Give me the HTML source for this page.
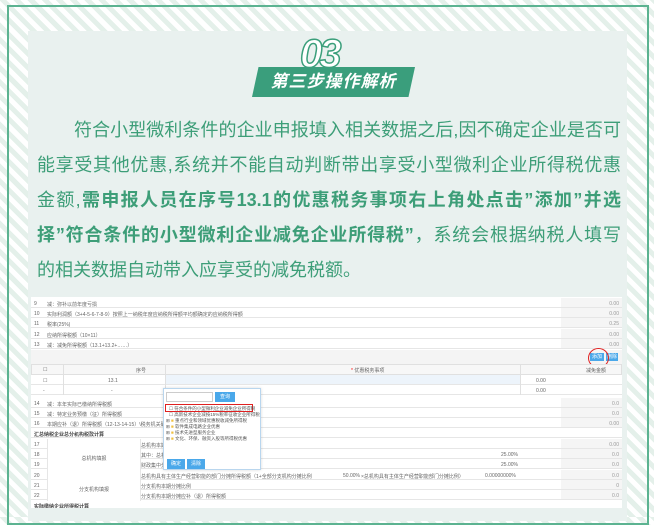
<!DOCTYPE html>
<html><head><meta charset="utf-8"><style>
*{margin:0;padding:0;box-sizing:border-box}
body{width:654px;height:517px;overflow:hidden;position:relative;background:repeating-linear-gradient(45deg,#ffffff 0 5px,#e4f0ea 5px 10px);font-family:"Liberation Sans","Noto Sans CJK SC",sans-serif}
.frame{position:absolute;left:7px;top:5px;width:642px;height:520px;border:2px solid #5cb391}
.panel{position:absolute;left:28px;top:31px;width:599px;height:490px;background:#e9f1ef}
.abs{position:absolute}
.t03{left:300px;top:34px;font-size:40px;font-style:italic;font-weight:bold;color:#fff;-webkit-text-stroke:1.5px #3b9f7b;letter-spacing:-3px;line-height:40px}
.ban{left:252px;top:67px;width:163px;height:30px;background:#3a9e7c;clip-path:polygon(4% 0,100% 0,96% 100%,0 100%)}
.bant{left:252px;top:67px;width:163px;height:30px;line-height:30px;text-align:center;color:#fff;font-size:17px;font-weight:bold;font-style:italic;letter-spacing:1px}
.para{left:37px;width:584px;font-size:18px;color:#3d9e78;line-height:35px}
.ln{position:absolute;left:0;width:584px;white-space:nowrap;text-align:justify;text-align-last:justify;height:35px}
b{font-weight:bold}
.tbl{left:31px;top:297px;width:591px;height:211px;background:#fff;font-size:5px;color:#666;overflow:hidden}
.r{position:absolute;left:0;width:591px;height:10.3px;border-bottom:1px solid #e6e6e6}
.r .n{position:absolute;left:3px;top:3px}
.r .l{position:absolute;left:16px;top:3px}
.r .v{position:absolute;left:530px;width:61px;height:100%;background:#f5f5f5;text-align:right;padding-right:3px;padding-top:3px;color:#999}
.btn{background:#4aa8ea;color:#fff;font-size:5px;text-align:center}
</style></head><body>
<div class="frame"></div>
<div class="panel"></div>
<div class="abs t03">03</div>
<div class="abs ban"></div>
<div class="abs bant">第三步操作解析</div>
<div class="abs para" style="top:113px">
<div class="ln" style="top:0;left:37px;width:547px">符合小型微利条件的企业申报填入相关数据之后,因不确定企业是否可</div>
<div class="ln" style="top:35px">能享受其他优惠,系统并不能自动判断带出享受小型微利企业所得税优惠</div>
<div class="ln" style="top:70px">金额,<b>需申报人员在序号13.1的优惠税务事项右上角处点击”添加”并选</b></div>
<div class="ln" style="top:105px"><b>择”符合条件的小型微利企业减免企业所得税”</b>，系统会根据纳税人填写</div>
<div class="ln" style="top:140px;text-align-last:left">的相关数据自动带入应享受的减免税额。</div>
</div>
<div class="abs tbl">
<div class="r" style="top:1px"><span class="n">9</span><span class="l">减：弥补以前年度亏损</span><span class="v">0.00</span></div>
<div class="r" style="top:11px"><span class="n">10</span><span class="l">实际利润额（3+4-5-6-7-8-9）按照上一纳税年度应纳税所得额平均额确定的应纳税所得额</span><span class="v">0.00</span></div>
<div class="r" style="top:21px"><span class="n">11</span><span class="l">税率(25%)</span><span class="v">0.25</span></div>
<div class="r" style="top:32px"><span class="n">12</span><span class="l">应纳所得税额（10×11）</span><span class="v">0.00</span></div>
<div class="r" style="top:42px"><span class="n">13</span><span class="l">减：减免所得税额（13.1+13.2+……）</span><span class="v">0.00</span></div>
<div class="abs" style="left:0;top:53px;width:591px;height:14px;background:#f4f4f4"></div>
<div class="abs btn" style="left:559px;top:56px;width:14px;height:8px;line-height:8px">添加</div>
<div class="abs btn" style="left:575px;top:56px;width:12px;height:8px;line-height:8px">删除</div>
<div class="abs" style="left:557px;top:51px;width:21px;height:20px;border:1.5px solid #e02020;border-radius:50%"></div>
<div class="abs" style="left:0;top:67px;width:591px;height:11px;background:#f7f7f7;border:1px solid #e0e0e0"></div>
<div class="abs" style="left:12px;top:70px">☐</div><div class="abs" style="left:105px;top:70px">序号</div><div class="abs" style="left:320px;top:70px"><span style="color:red">*</span> 优惠税务事项</div><div class="abs" style="left:555px;top:70px">减免金额</div>
<div class="abs" style="left:134px;top:78px;width:355px;height:10px;background:#edf4fb"></div>
<div class="r" style="top:78px;height:10px"><span class="n" style="left:12px">☐</span><span class="l" style="left:77px">13.1</span><span class="abs" style="left:505px;top:3px">0.00</span></div>
<div class="r" style="top:88px;height:10px"><span class="n" style="left:12px">-</span><span class="l" style="left:80px">-</span><span class="abs" style="left:505px;top:3px">0.00</span></div>
<div class="abs" style="left:32px;top:67px;height:31px;border-left:1px solid #e0e0e0"></div>
<div class="abs" style="left:134px;top:67px;height:31px;border-left:1px solid #e0e0e0"></div>
<div class="abs" style="left:489px;top:67px;height:31px;border-left:1px solid #e0e0e0"></div>
<div class="r" style="top:101px"><span class="n">14</span><span class="l">减：本年实际已缴纳所得税额</span><span class="v">0.0</span></div>
<div class="r" style="top:111px"><span class="n">15</span><span class="l">减：特定业务预缴（征）所得税额</span><span class="v">0.0</span></div>
<div class="r" style="top:121px"><span class="n">16</span><span class="l">本期应补（退）所得税额（12-13-14-15）\税务机关确定的本期应纳所得税额</span><span class="v">0.00</span></div>
<div class="r" style="top:131px"><span class="n" style="font-weight:bold;color:#444">汇总纳税企业总分机构税款计算</span></div>
<div class="r" style="top:142px"><span class="n">17</span><span class="abs" style="left:110px;top:3px">总机构本期分摊应补（退）所得税额</span><span class="v">0.00</span></div>
<div class="r" style="top:152px"><span class="n">18</span><span class="abs" style="left:110px;top:3px">其中：总机构分摊应补（退）所得税额</span><span class="abs" style="left:470px;top:3px">25.00%</span><span class="v">0.0</span></div>
<div class="r" style="top:162px"><span class="n">19</span><span class="abs" style="left:110px;top:3px">财政集中分配应补（退）所得税额</span><span class="abs" style="left:470px;top:3px">25.00%</span><span class="v">0.0</span></div>
<div class="r" style="top:173px"><span class="n">20</span><span class="abs" style="left:110px;top:3px">总机构具有主体生产经营职能的部门分摊所得税额（1+全部分支机构分摊比例</span><span class="abs" style="left:312px;top:3px">50.00%</span><span class="abs" style="left:330px;top:3px">×总机构具有主体生产经营职能部门分摊比例）</span><span class="abs" style="left:454px;top:3px">0.00000000%</span><span class="v">0.0</span></div>
<div class="r" style="top:183px"><span class="n">21</span><span class="abs" style="left:110px;top:3px">分支机构本期分摊比例</span><span class="v">0</span></div>
<div class="r" style="top:193px"><span class="n">22</span><span class="abs" style="left:110px;top:3px">分支机构本期分摊应补（退）所得税额</span><span class="v">0.0</span></div>
<div class="abs" style="left:3px;top:206px;font-weight:bold;color:#444">实际缴纳企业所得税计算</div>
<div class="abs" style="left:16px;top:142px;width:94px;height:41px;border-left:1px solid #e6e6e6;border-right:1px solid #e6e6e6;background:#fff;text-align:center;line-height:41px">总机构填报</div>
<div class="abs" style="left:16px;top:183px;width:94px;height:21px;border-left:1px solid #e6e6e6;border-right:1px solid #e6e6e6;background:#fff;text-align:center;line-height:21px">分支机构填报</div>
</div>
<div class="abs" style="left:163px;top:388px;width:98px;height:82px;background:#fff;border:1px solid #b9d6ee;box-shadow:0 0 3px rgba(0,0,0,.15);font-size:4.5px;color:#555">
<div class="abs" style="left:2px;top:3px;width:47px;height:10px;border:1px solid #ccc"></div>
<div class="abs btn" style="left:51px;top:3px;width:20px;height:10px;line-height:10px">查询</div>
<div class="abs" style="left:1px;top:15px;width:88px;height:8px;border:1.5px solid #e02020"></div>
<div class="abs" style="left:5px;top:17px">☐ 符合条件的小型微利企业减免企业所得税</div>
<div class="abs" style="left:5px;top:23px">☐ 高新技术企业减按15%税率征收企业所得税</div>
<div class="abs" style="left:2px;top:29px">⊞ <span style="color:#f0c040">■</span> 重点行业和领域优惠税收减免所得税</div>
<div class="abs" style="left:2px;top:35px">⊞ <span style="color:#f0c040">■</span> 软件集成电路企业优惠</div>
<div class="abs" style="left:2px;top:41px">⊞ <span style="color:#f0c040">■</span> 技术先进型服务企业</div>
<div class="abs" style="left:2px;top:47px">⊞ <span style="color:#f0c040">■</span> 文化、环保、融资入股等所得税优惠</div>
<div class="abs btn" style="left:3px;top:70px;width:18px;height:10px;line-height:10px">确定</div>
<div class="abs btn" style="left:23px;top:70px;width:18px;height:10px;line-height:10px">清除</div>
</div>
</body></html>
